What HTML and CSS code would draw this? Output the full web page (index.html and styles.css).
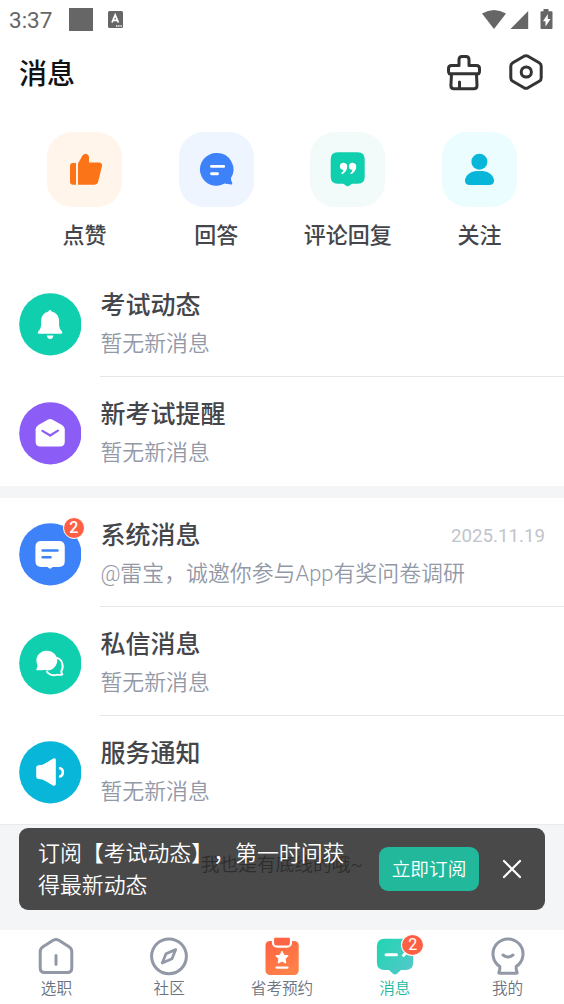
FILE: index.html
```html
<!DOCTYPE html>
<html lang="zh-CN">
<head>
<meta charset="utf-8">
<title>消息</title>
<link rel="stylesheet" href="styles.css">
</head>
<body>
<div class="screen">
  <div class="status">
    <span class="clock">3:37</span>
    <span class="square"></span>
    <svg class="ime" width="15" height="17" viewBox="0 0 15 17"><rect width="15" height="17" rx="1.5" fill="#666"/><path d="M4 11.5 7.2 4l3.2 7.500M5.200 9.300h4" fill="none" stroke="#fff" stroke-width="1.8"/><path d="M8 15h1.400m.8 0h1.400m.8 0h1.400" stroke="#fff" stroke-width="1.300"/></svg>
    <svg class="signals" width="72" height="21" viewBox="0 0 72 21"><g fill="#666"><path d="M0 4.500Q12 -2.500 24 4.500L12 20z"/><path d="M46.200 2v18H28.500z"/><path d="M58.500 3.200q0-1 1-1h2V0h5v2.200h3q1 0 1 1v15.800q0 1-1 1h-10q-1 0-1-1z"/></g><path d="M65.800 5 61 12.300h2.500v5.200l5-7.500h-2.700z" fill="#fff"/></svg>
  </div>

  <header class="header">
    <h1 class="title">消息</h1>
    <div class="tools">
      <svg width="36" height="38" viewBox="0 0 36 38" fill="none" stroke="#333" stroke-width="3" stroke-linecap="round" stroke-linejoin="round"><path d="M3.300 20.800H32.700M3.300 20.800Q2.500 20 2.500 18v-2.500q0-3 3-3H13V6.800q0-3.300 3-3.300h4q3 0 3 3.300v5.700h7.500q3 0 3 3V18q0 2.800-2 2.800H4.500q-1 0-1.200-.5M5.500 21.500 4.900 32.500q0 3.300 3 3.300H28q3 0 3-3.300L30.500 21.500M13.500 29v6"/></svg>
      <svg width="36" height="38" viewBox="0 0 36 38" fill="none" stroke="#333" stroke-width="3"><path d="M16 3.200q2-1 4 0l11.200 6.500q2 1.200 2 3.300v12q0 2.100-2 3.300L20 34.800q-2 1-4 0L4.800 28.300q-2-1.200-2-3.300V13q0-2.100 2-3.300z"/><circle cx="18.300" cy="19" r="5.100"/></svg>
    </div>
  </header>

  <nav class="shortcuts">
    <div class="shortcut">
      <svg class="tile tile-orange" viewBox="0 0 75 75"><g fill="#fb7417"><path d="M29 31V52.800H26q-3 0-3-3V34q0-3 3-3z"/><path d="M31 52.800V31.500L35.500 23.500Q37 21.500 39.300 21.900 42 22.500 42 25.500V30.500H52.500Q55.600 31 55 34L51.200 49.500Q50.400 52.800 47 52.800z"/></g></svg>
      <span>点赞</span>
    </div>
    <div class="shortcut">
      <svg class="tile tile-blue" viewBox="0 0 75 75"><path d="M38 21a16.400 16.400 0 0 1 14 25q-.4 2 1.200 5 .6 1.800-1.200 1.600l-6.500-1A16.400 16.400 0 1 1 38 21z" fill="#3d82f8"/><path d="M32.500 34.400H44.700M32.500 41.700H38.500" stroke="#fff" stroke-width="2.900" stroke-linecap="round"/></svg>
      <span>回答</span>
    </div>
    <div class="shortcut">
      <svg class="tile tile-green" viewBox="0 0 75 75"><path d="M27.700 20.300h20q7 0 7 7v17.400q0 7-7 7H42L39.200 53.800q-1.500 1-3 0L33.400 51.700H27.700q-7 0-7-7V27.300q0-7 7-7z" fill="#10cfaf"/><path d="M33.500 30.800c6 0 4.500 9.500-1.800 11.500l-.4-1.200q1.900-1.300 2.100-3.200a3.550 3.550 0 0 1 .1-7.100zM42.500 30.800c6 0 4.500 9.500-1.800 11.500l-.4-1.200q1.900-1.300 2.100-3.200a3.550 3.550 0 0 1 .1-7.100z" fill="#fff"/></svg>
      <span>评论回复</span>
    </div>
    <div class="shortcut">
      <svg class="tile tile-cyan" viewBox="0 0 75 75"><g fill="#08b6d9"><circle cx="37.400" cy="29.700" r="8"/><path d="M34 39h7q9.500 1.500 11 8.500.5 5.500-5 5.500H28q-5.500 0-5-5.500Q24.500 40.500 34 39z"/></g></svg>
      <span>关注</span>
    </div>
  </nav>

  <section class="group">
    <article class="row">
      <div class="avatar"><svg viewBox="0 0 63 63"><circle cx="31.500" cy="31.500" r="31.300" fill="#10cfaf"/><path d="M29.500 18.700q1.700-3 3.400 0Q40 20.500 40.300 28.500V33Q40.500 36 43.500 39.200 44 41 42.500 41H20Q18.500 41 19 39.200 22 36 22.200 33V28.500Q22.500 20.500 29.500 18.700zM28 42.700h6.500Q34 46.300 31.300 46.300T28 42.700z" fill="#fff"/></svg></div>
      <div class="body"><div class="line"><h2>考试动态</h2></div><p>暂无新消息</p></div>
    </article>
    <article class="row">
      <div class="avatar"><svg viewBox="0 0 63 63"><circle cx="31.500" cy="31.500" r="31.300" fill="#8b5cf6"/><path d="M29.300 17.700q2-1 4 0L43.200 23Q46 24.600 46 27.500V40q0 4.700-4.700 4.700H21.400q-4.700 0-4.700-4.700V27.500Q16.700 24.600 19.500 23z" fill="#fff"/><path d="m23.500 29 7.800 4.700 7.800-4.900" fill="none" stroke="#8b5cf6" stroke-width="2.200" stroke-linecap="round" stroke-linejoin="round"/></svg></div>
      <div class="body"><div class="line"><h2>新考试提醒</h2></div><p>暂无新消息</p></div>
    </article>
  </section>

  <section class="group">
    <article class="row">
      <div class="avatar"><svg viewBox="0 0 63 63"><circle cx="31.500" cy="31.500" r="31.300" fill="#3d82f8"/><path d="M22.500 18H40q6 0 6 6V38.300q0 6-6 6H34L32.300 45.600q-1 .8-2 0L28.500 44.300h-6q-6 0-6-6V24q0-6 6-6z" fill="#fff"/><path d="M23.700 27.700H38.700M23.700 34.400H31.700" stroke="#3d82f8" stroke-width="2.500" stroke-linecap="round"/></svg><span class="badge">2</span></div>
      <div class="body"><div class="line"><h2>系统消息</h2><time>2025.11.19</time></div><p>@雷宝，诚邀你参与App有奖问卷调研</p></div>
    </article>
    <article class="row">
      <div class="avatar"><svg viewBox="0 0 63 63"><circle cx="31.500" cy="31.500" r="31.300" fill="#10cfaf"/><path d="M37.500 25.800c6.500 1.700 7.800 9.200 5 13.700q-.2 1.300 1.100 3.200-2.500.8-5 .1c-4 1.500-8.800.3-11-3.300" fill="none" stroke="#fff" stroke-width="1.900" stroke-linejoin="round"/><path d="M27.500 18.800a9.900 9.900 0 1 1-1.200 19.500q-1-.3-3.300.1l-5 .1q-1.400-.5-.2-1.900 1.200-2 .7-3.500A9.900 9.900 0 0 1 27.500 18.800z" fill="#fff"/></svg></div>
      <div class="body"><div class="line"><h2>私信消息</h2></div><p>暂无新消息</p></div>
    </article>
    <article class="row">
      <div class="avatar"><svg viewBox="0 0 63 63"><circle cx="31.500" cy="31.500" r="31.300" fill="#08b6d9"/><path d="M19.500 24.300q4.500 0 7-2L34.500 17.500Q37 16.500 37 19V43.300Q37 45.500 34.500 45L26.500 40.300Q24 38.300 19.500 38.300 17.300 38 17.300 36V26.500Q17.300 24.500 19.500 24.300z" fill="#fff"/><path d="M41.300 27.400q2.800.6 2.800 4.100t-2.800 4.200" fill="none" stroke="#fff" stroke-width="2.500" stroke-linecap="round"/></svg></div>
      <div class="body"><div class="line"><h2>服务通知</h2></div><p>暂无新消息</p></div>
    </article>
  </section>

  <footer class="end">我也是有底线的哦~</footer>

  <aside class="toast">
    <p>订阅【考试动态】，第一时间获<br>得最新动态</p>
    <button class="subscribe">立即订阅</button>
    <svg class="close" width="20" height="20" viewBox="0 0 20 20"><path d="m2 2 16 16M18 2 2 18" stroke="#fff" stroke-width="2.200" stroke-linecap="round"/></svg>
  </aside>

  <nav class="tabs">
    <div class="tab">
      <svg width="48" height="40" viewBox="0 0 48 40" fill="none" stroke="#9298a6" stroke-width="3"><path d="M21.200 4.200q2.800-1.500 5.600 0L37 10.700Q39.800 12.600 39.800 15.500V32q0 4.500-4.500 4.500H12.700q-4.500 0-4.500-4.500V15.500q0-2.900 2.800-4.800z"/><path d="M24 19.500v8.700" stroke-linecap="round"/></svg>
      <span>选职</span>
    </div>
    <div class="tab">
      <svg width="48" height="40" viewBox="0 0 48 40" fill="none" stroke="#9298a6" stroke-width="3"><circle cx="24" cy="20.300" r="17.400"/><path d="M30.700 13.600 21 17.800 17.300 27 27 22.800z" stroke-width="2.800" stroke-linejoin="round"/></svg>
      <span>社区</span>
    </div>
    <div class="tab">
      <svg width="48" height="40" viewBox="0 0 48 40"><defs><linearGradient id="warm" x2=".5" y2="1"><stop stop-color="#ff6242"/><stop offset="1" stop-color="#ff8148"/></linearGradient><linearGradient id="mint" x2="1" y2=".7"><stop stop-color="#20d5b0"/><stop offset="1" stop-color="#50c9c8"/></linearGradient></defs><rect x="7.500" y="5" width="33.200" height="34" rx="4.500" fill="url(#warm)"/><rect x="15" y="-1" width="18" height="11.700" rx="4" fill="#ff6545" stroke="#fff" stroke-width="2.200"/><path d="M13 0h22v1.700H13z" fill="#fff"/><path d="m24 15.300 1.900 3.900 4.300.6-3.100 3 .7 4.300-3.800-2-3.800 2 .7-4.300-3.100-3 4.300-.6z" fill="#fff" stroke="#fff" stroke-linejoin="round"/><path d="M18.600 31.600H29.400" stroke="#fff" stroke-width="2.300" stroke-linecap="round"/></svg>
      <span>省考预约</span>
    </div>
    <div class="tab active">
      <svg width="48" height="40" viewBox="0 0 48 40"><path d="M13.500 2.700H34.600q7.600 0 7.600 7.600V26.500q0 7.600-7.600 7.600H30L26 37.700q-2 1.500-4 0L18 34.100h-4.500q-7.600 0-7.600-7.600V10.300q0-7.600 7.600-7.600z" fill="url(#mint)"/><path d="M15 18.800H25.500M32.600 19.300l2-2.300" stroke="#fff" stroke-width="3" stroke-linecap="round"/></svg>
      <span>消息</span><b class="badge tab-badge">2</b>
    </div>
    <div class="tab">
      <svg width="48" height="40" viewBox="0 0 48 40" fill="none" stroke="#9298a6" stroke-width="3" stroke-linecap="round" stroke-linejoin="round"><path d="M15.800 30.500A15 15 0 1 1 32.200 30.500V33l1 4Q33 37.300 32 37.300H16Q15 37.300 14.800 37l1-4z"/><path d="M19 19q5 3.900 10 0"/></svg>
      <span>我的</span>
    </div>
  </nav>
</div>
</body>
</html>
```
FILE: styles.css
```css
* { box-sizing: border-box; }
body { margin: 0; background: #fff; font-family: Roboto, "Noto Sans CJK SC", sans-serif; text-spacing-trim: space-all; }
h1, h2, p { margin: 0; }
svg { display: block; flex: none; }

.screen { position: relative; display: flex; flex-direction: column; width: 564px; height: 1004px; overflow: hidden; background: #f4f5f7; }

.status { display: flex; align-items: center; height: 38px; padding: 0 10px 0 9px; background: #fff; color: #666; }
.clock { width: 60px; font-size: 22.500px; line-height: 38px; padding-top: 1px; }
.square { width: 24px; height: 23px; background: #666; }
.ime { margin-left: 15px; }
.signals { margin: 0 0 0 auto; }

.header { display: flex; align-items: center; justify-content: space-between; height: 68px; padding: 0 19.700px 0 19px; background: #fff; }
.title { padding-top: 5px; color: #111214; font-size: 28px; font-weight: 500; line-height: 40px; }
.tools { display: flex; gap: 26.500px; }

.shortcuts { display: grid; grid-template-columns: repeat(4, 1fr); height: 162px; padding: 26px 18.750px 0; background: #fff; }
.shortcut { display: flex; flex-direction: column; align-items: center; gap: 13px; color: #44464b; font-size: 22px; font-weight: 500; line-height: 32px; }
.tile { width: 75px; height: 75px; border-radius: 25px; }
.tile-orange { background: #fff5eb; }
.tile-blue { background: #eef5ff; }
.tile-green { background: #f2fbfa; }
.tile-cyan { background: #ebfdff; }

.group { background: #fff; }
.group + .group { margin-top: 12px; }
.row { display: flex; height: 109px; padding-left: 18.700px; }
.avatar { position: relative; width: 62.700px; margin: 25px 19px 0 0; flex: none; }
.avatar svg { width: 62.700px; height: 62.700px; }
.badge { position: absolute; top: -6px; right: -3.500px; display: flex; align-items: center; justify-content: center; width: 22px; height: 22px; border: 1px solid #fff; border-radius: 50%; background: #ff6045; color: #fff; font: 500 16px/20px Roboto, sans-serif; }
.body { flex: 1; padding-top: 20px; border-bottom: 1px solid #e5e6ea; }
.row:last-child .body { border-bottom: 0; }
.group:last-of-type .row:last-child { border-bottom: 1px solid #e9eaec; }
.line { display: flex; justify-content: space-between; align-items: center; height: 36px; padding-right: 19px; }
h2 { color: #44464b; font-size: 25px; font-weight: 500; line-height: 36px; }
time { color: #c0c4cc; font-size: 18.700px; line-height: 36px; }
.row p { margin-top: 4px; color: #9298a6; font-size: 21.900px; font-weight: 350; line-height: 32px; }

.end { height: 105px; padding-top: 26px; color: #999; font-size: 18.700px; font-weight: 350; line-height: 28px; text-align: center; }

.toast { position: absolute; left: 19px; top: 828px; display: flex; align-items: center; width: 526px; height: 82px; padding-left: 19px; border-radius: 9px; background: rgba(0, 0, 0, .7); color: #fff; }
.toast p { width: 341px; padding-top: 2px; font-size: 21.900px; font-weight: 350; line-height: 32.500px; white-space: nowrap; }
.subscribe { width: 100px; height: 44px; padding: 2px 0 0; border: 0; border-radius: 9px; background: #22b89c; color: #fff; font: 350 18.700px/28px Roboto, "Noto Sans CJK SC", sans-serif; }
.close { margin-left: 23px; }

.tabs { display: grid; grid-template-columns: repeat(5, 1fr); height: 74px; padding-top: 6px; background: #fff; }
.tab { position: relative; display: flex; flex-direction: column; align-items: center; color: #6b7280; font-size: 15.600px; font-weight: 350; line-height: 26px; }
.active { color: #22b89c; }
.tab-badge { top: -2px; right: 27px; width: 23px; height: 22px; font-weight: 400; }
```
